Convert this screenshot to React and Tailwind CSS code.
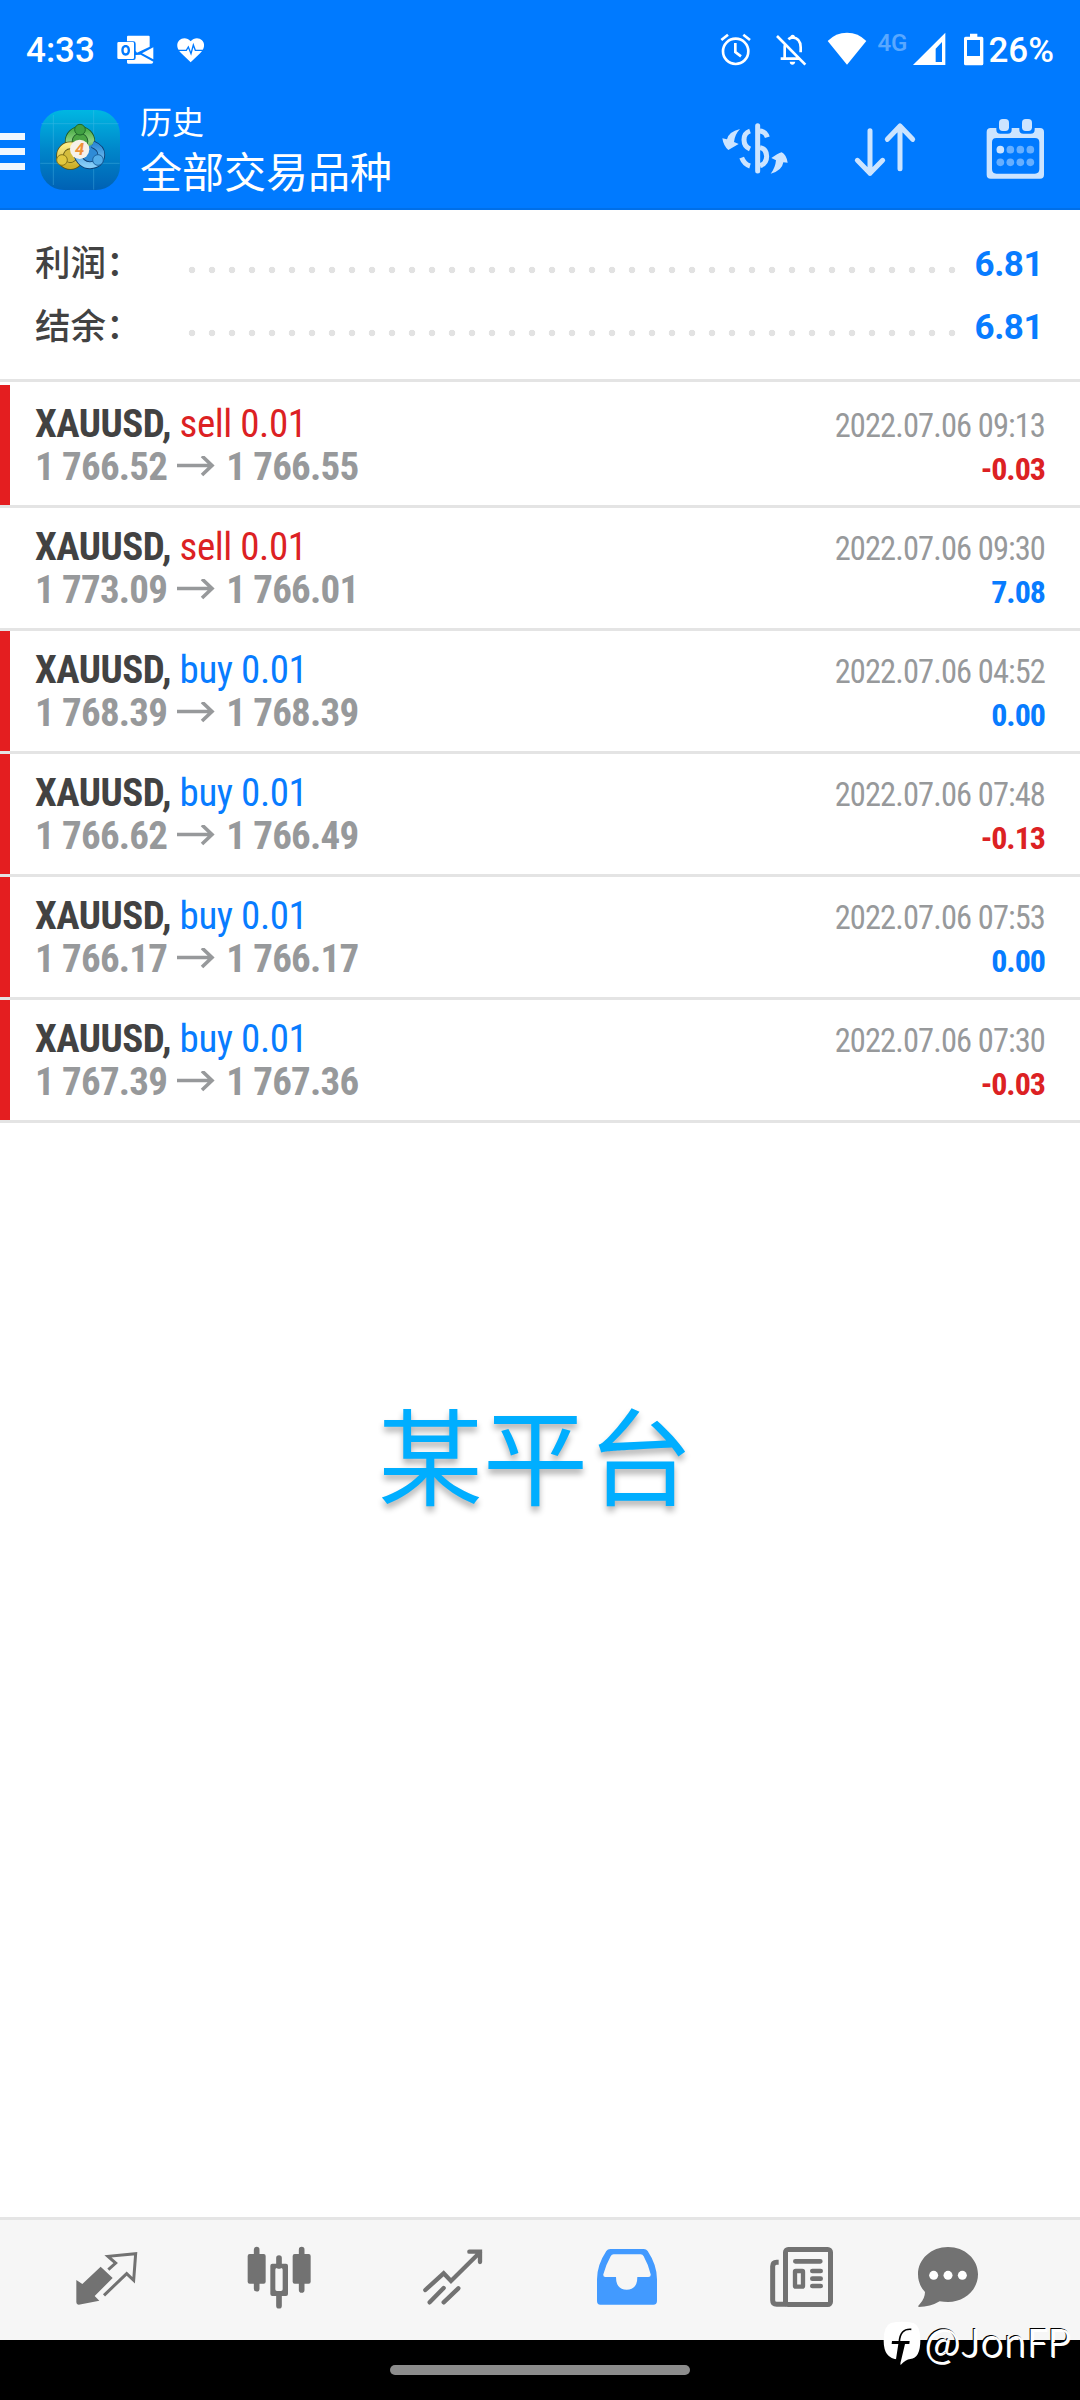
import clsx from 'clsx';

const deals = [
    { side: 'sell', open: '1 766.52', close: '1 766.55', time: '2022.07.06 09:13', profit: '-0.03', marked: true },
    { side: 'sell', open: '1 773.09', close: '1 766.01', time: '2022.07.06 09:30', profit: '7.08', marked: false },
    { side: 'buy', open: '1 768.39', close: '1 768.39', time: '2022.07.06 04:52', profit: '0.00', marked: true },
    { side: 'buy', open: '1 766.62', close: '1 766.49', time: '2022.07.06 07:48', profit: '-0.13', marked: true },
    { side: 'buy', open: '1 766.17', close: '1 766.17', time: '2022.07.06 07:53', profit: '0.00', marked: true },
    { side: 'buy', open: '1 767.39', close: '1 767.36', time: '2022.07.06 07:30', profit: '-0.03', marked: true },
];

const totals = [
    { label: '利润：', value: '6.81' },
    { label: '结余：', value: '6.81' },
];

const StatusBar = () => (
    <div className="flex h-[100px] items-center pl-[26px] pr-[26px] font-['Roboto'] text-[35px] font-medium text-white">
        <span className="pt-[3px]">4:33</span>
        <svg viewBox="345 30 120 120" className="ml-5 size-10" fill="#fff">
            <path d="M381 50q0-3 3-3h62q3 0 3 3v30l-38 18-4-5V71q0-7-7-7h-19z" />
            <path d="M460 82v36l-34-18z" />
            <path d="M381 120h20q6 0 6-7v-8l15-1 38 21q-1 6-6 6h-70q-3 0-3-4z" />
            <path fillRule="evenodd" d="M356 66h42q4 0 4 4v43q0 4-4 4h-42q-4 0-4-4V70q0-4 4-4zm21 9c-9 0-13 7-13 16s4 16 13 16 13-7 13-16-4-16-13-16zm0 7c4 0 6 4 6 9s-2 9-6 9-6-4-6-9 2-9 6-9z" />
        </svg>
        <svg viewBox="513 30 120 120" className="ml-4 size-10">
            <path d="M572 127l-29-28c-14-13-14-30-5-38 9-9 25-8 34 3 9-11 25-12 34-3 9 8 9 25-5 38z" fill="#fff" />
            <path d="M533 91h26l6-10 8 20 7-26 6 16h26" fill="none" stroke="#007aff" strokeWidth="4" />
        </svg>
        <div className="flex-1" />
        <svg viewBox="108 90 120 120" className="size-10" fill="none" stroke="#fff" strokeWidth="8">
            <circle cx="167" cy="154" r="38" />
            <path d="M166 129v27l17 13M124 120l20-16M210 120l-20-16" />
        </svg>
        <svg viewBox="273 90 120 120" className="ml-[15px] size-10" fill="none" stroke="#fff" strokeWidth="8">
            <path d="M291 108l85 86M302 176h56M314 174v-34q0-6 3-10M325 118q7-6 13-6 24 3 24 30v15" />
            <path d="M329 185h17q-2 9-9 9t-8-9zM331 113q0-9 7-9t7 9z" fill="#fff" stroke="none" />
        </svg>
        <svg viewBox="441 90 120 120" className="ml-4 size-10" fill="#fff">
            <path d="M443 123q24-25 58-25t58 25l-58 71z" />
        </svg>
        <span className="ml-2.5 w-8 pb-[15px] text-2xl leading-none opacity-35">4G</span>
        <svg viewBox="687 90 120 120" className="size-10" fill="#fff">
            <path fillRule="evenodd" d="M699 195l97-97v97zm68-49v40h19v-60z" />
        </svg>
        <svg viewBox="840 90 84 120" className="ml-[11px] h-10 w-7" fill="#fff">
            <path fillRule="evenodd" d="M870 101h22v9h13q5 0 5 5v76q0 5-5 5h-48q-5 0-5-5v-76q0-5 5-5h13zm-9 19v48h39v-48z" />
        </svg>
        <span className="pt-[3px]">26%</span>
    </div>
);

const AppLogo = () => (
    <svg viewBox="120 270 240 240" className="size-20 shrink-0">
        <defs>
            <linearGradient id="tile" x1="0" y1="0" x2="0" y2="1">
                <stop offset="0" stopColor="#00b7e2" />
                <stop offset=".5" stopColor="#0086ca" />
                <stop offset="1" stopColor="#0061b4" />
            </linearGradient>
            <linearGradient id="green" x1="0" y1="0" x2="0" y2="1">
                <stop offset="0" stopColor="#4fb04a" />
                <stop offset=".5" stopColor="#8fd283" />
                <stop offset="1" stopColor="#2d8b36" />
            </linearGradient>
            <linearGradient id="yellow" x1="0" y1="0" x2="0" y2="1">
                <stop offset="0" stopColor="#fbec86" />
                <stop offset="1" stopColor="#cdb02a" />
            </linearGradient>
            <linearGradient id="blue" x1="0" y1="0" x2="0" y2="1">
                <stop offset="0" stopColor="#2f8bd6" />
                <stop offset="1" stopColor="#86cdf7" />
            </linearGradient>
        </defs>
        <rect x="120" y="270" width="240" height="240" rx="72" fill="url(#tile)" />
        <path d="M160 285v210M281 271v238M124 311h232M121 430h238" stroke="#5cc3ea" strokeWidth="2" opacity=".5" />
        <circle cx="240" cy="364" r="34" fill="#4aa545" stroke="#1d5a2a" strokeWidth="23" />
        <circle cx="240" cy="364" r="34" fill="none" stroke="url(#green)" strokeWidth="18" />
        <circle cx="211" cy="407" r="31" fill="#d4bc3c" stroke="#5d5312" strokeWidth="23" />
        <circle cx="211" cy="407" r="31" fill="none" stroke="url(#yellow)" strokeWidth="18" />
        <path d="M230 400q12 36 40 36 32-2 34-32 0-20-26-31" fill="#2f8bd6" stroke="#0d3f73" strokeWidth="23" />
        <path d="M230 400q12 36 40 36 32-2 34-32 0-20-26-31" fill="none" stroke="url(#blue)" strokeWidth="18" />
        <circle cx="240" cy="329" r="16" fill="#41a043" stroke="#1d6a2a" strokeWidth="3" />
        <circle cx="186" cy="420" r="16" fill="#e2c83e" stroke="#85751a" strokeWidth="3" />
        <circle cx="294" cy="420" r="16" fill="#55ade8" stroke="#1c63a0" strokeWidth="3" />
        <circle cx="239" cy="388" r="29" fill="#f6f1ea" />
        <text x="239" y="406" textAnchor="middle" className="font-['Roboto'] text-[50px] font-bold italic" fill="#ee9238">4</text>
    </svg>
);

const Toolbar = () => (
    <div className="flex h-[100px] items-center pr-[29px]">
        <div className="flex w-[25px] flex-col gap-2 pt-[3px]">
            <div className="h-[7px] bg-[#f0f7ff]" />
            <div className="h-[7px] bg-[#f0f7ff]" />
            <div className="h-[7px] bg-[#f0f7ff]" />
        </div>
        <div className="ml-[15px]">
            <AppLogo />
        </div>
        <div className="ml-5 flex flex-1 flex-col pb-[6px] font-['Noto_Sans_CJK_SC',sans-serif] text-white">
            <span className="text-[32px] leading-[46px]">历史</span>
            <span className="text-[42px] leading-[54px]">全部交易品种</span>
        </div>
        <div className="flex gap-[58px] text-[#cce4ff]">
            <svg viewBox="117 342 216 216" className="size-[72px]" fill="none" stroke="currentColor">
                <path d="M233 377v136" strokeWidth="15" strokeLinecap="round" />
                <path d="M240 393q16 1 22 19M240 443q20 4 20 26t-20 28M210 393q-18 6-18 26 0 20 18 28M185 473q8 20 25 25" strokeWidth="15" />
                <path d="M180 387q-34 8-39 31l-14-3q4 24 18 35 12-7 31-18l-14-6q2-22 18-39zM272 521q34-8 38-34l13 1q-4-24-18-31-12 4-31 17l14 7q-2 23-16 40z" fill="currentColor" stroke="none" />
            </svg>
            <svg viewBox="507 342 216 216" className="size-[72px]" fill="none" stroke="currentColor" strokeWidth="15" strokeLinecap="round" strokeLinejoin="round">
                <path d="M570 392v128M532 481l38 39 38-39M660 506V378M622 418l38-40 38 40" />
            </svg>
            <svg viewBox="897 342 216 216" className="size-[72px]" fill="currentColor">
                <path fillRule="evenodd" d="M932 384h17v5q0 12 12 12h22q12 0 12-12v-5h23v5q0 12 12 12h22q12 0 12-12v-5h16q12 0 12 12v128q0 12-12 12H932q-12 0-12-12V396q0-12 12-12zm17 30q-13 0-13 13v80q0 14 13 14h116q13 0 13-14v-80q0-13-13-13z" />
                <rect x="957" y="357" width="30" height="36" rx="11" />
                <rect x="1026" y="357" width="30" height="36" rx="11" />
                <circle cx="961" cy="449" r="11.500" />
                <g opacity=".5">
                    <circle cx="991" cy="449" r="11.500" />
                    <circle cx="1021" cy="449" r="11.500" />
                    <circle cx="1051" cy="449" r="11.500" />
                    <circle cx="961" cy="487" r="11.500" />
                    <circle cx="991" cy="487" r="11.500" />
                    <circle cx="1021" cy="487" r="11.500" />
                    <circle cx="1051" cy="487" r="11.500" />
                </g>
            </svg>
        </div>
    </div>
);

const TotalRow = ({ label, value }) => (
    <div className="flex h-[63px] items-center pl-[35px] pr-[37px]">
        <span className="w-[147px] pb-[3px] font-['Noto_Sans_CJK_SC',sans-serif] text-[35.5px] font-medium leading-[60px] text-[#424242]">{label}</span>
        <div className="mt-[14px] h-5 w-[780px] shrink-0 bg-[radial-gradient(circle,#e2e2e2_3px,transparent_3.6px)] bg-[length:20px_20px]" />
        <span className="ml-auto pt-[5px] font-['Roboto'] text-[35px] font-bold tracking-[-0.5px] text-[#087cff]">{value}</span>
    </div>
);

const DealRow = ({ deal }) => (
    <div className="flex h-[123px] border-b-[3px] border-[#e4e4e4]">
        <div className={clsx('w-2.5', deal.marked && 'bg-[#e41e20]')} />
        <div className="flex flex-1 flex-col justify-center pl-[25px] pr-[35px] pt-px font-['Roboto_Condensed'] text-[39px] leading-[43px]">
            <div className="flex h-[43px] items-baseline justify-between">
                <span className="whitespace-pre">
                    <span className="font-bold tracking-[-0.5px] text-[#424242]">XAUUSD, </span>
                    <span className={clsx('tracking-[-0.45px]', deal.side === 'sell' ? 'text-[#dc2123]' : 'text-[#087cff]')}>{deal.side} 0.01</span>
                </span>
                <span className="text-[32.5px] tracking-[-0.9px] text-[#97999b]">{deal.time}</span>
            </div>
            <div className="flex h-[43px] items-baseline justify-between">
                <span className="flex items-center font-bold tracking-[-0.8px] text-[#97999b]">
                    <span>{deal.open}</span>
                    <svg viewBox="0 0 38 22" className="ml-[10px] mr-[11px] h-[22px] w-[38px]" fill="none" stroke="currentColor" strokeWidth="3.600">
                        <path d="M0 9.500h35M25 0l10 9.500-10 9.500" />
                    </svg>
                    <span>{deal.close}</span>
                </span>
                <span className={clsx('text-[32px] font-bold tracking-[-1px]', deal.profit.startsWith('-') ? 'text-[#dc2123]' : 'text-[#087cff]')}>
                    {deal.profit}
                </span>
            </div>
        </div>
    </div>
);

const TabBar = () => (
    <div className="flex h-[123px] items-center border-t-[3px] border-[#e5e5e5] bg-[#f6f6f6] text-[#727272]">
        <svg viewBox="33 42 216 216" className="ml-[71px] size-[72px]" fill="currentColor">
            <path d="M122 110l36 34-54 54 14 14-62 12q-7 0-7-7v-67l18 12z" />
            <path d="M145 119l22-20-23-20 83-8-6 80-21-20-68 65" fill="none" stroke="currentColor" strokeWidth="9" />
        </svg>
        <svg viewBox="549 42 216 216" className="ml-[100px] size-[72px]" fill="currentColor">
            <path d="M590 59v117M725 59v121M657 84v24M657 196v31" stroke="currentColor" strokeWidth="17" strokeLinecap="round" />
            <rect x="563" y="72" width="54" height="89" rx="6" />
            <rect x="698" y="72" width="54" height="89" rx="6" />
            <path fillRule="evenodd" d="M637 101h41q6 0 6 6v85q0 6-6 6h-41q-6 0-6-6v-85q0-6 6-6zm14 13q-5 0-5 5v59q0 5 5 5h12q5 0 5-5v-59q0-5-5-5z" />
        </svg>
        <svg viewBox="1068 42 216 216" className="ml-[101px] size-[72px]" fill="none" stroke="currentColor" strokeWidth="13" strokeLinecap="round">
            <path d="M1096 180l55-50 22 23 87-86M1228 65h32v31M1109 217l42-43M1151 217l44-42" />
            <path d="M1240 60h25v28z" fill="currentColor" stroke="none" />
        </svg>
        <svg viewBox="33 42 216 216" className="ml-[103px] size-[72px]" fill="#429aff">
            <path fillRule="evenodd" d="M91 57h100q8 0 12 6 28 42 28 85v65q0 11-11 11H61q-10 0-10-11v-65q0-43 28-85 4-6 12-6zm10 16q-6 0-9 6-15 27-22 54-1 8 6 8h32q0 38 32 38t32-38h33q8 0 7-8-6-27-21-54-3-6-9-6z" />
        </svg>
        <svg viewBox="558 42 216 216" className="ml-[103px] size-[72px]" fill="none" stroke="currentColor" strokeWidth="15">
            <rect x="616.500" y="58.500" width="135" height="165" rx="8" />
            <path d="M596 97h-6q-12 0-12 12v102q0 12 12 12h28" />
            <path d="M646 94h75M697 123h25M697 146h25M697 168h25" strokeWidth="14" strokeLinecap="round" />
            <rect x="645" y="123" width="24" height="47" rx="2" strokeWidth="13" />
        </svg>
        <svg viewBox="996 42 216 216" className="ml-[74px] size-[72px]" fill="currentColor">
            <path d="M1104 51c50 0 90 36 90 82s-40 83-90 83q-13 0-25-2-28 17-63 17-3-3 3-8 16-18 16-37-21-22-21-53c0-46 40-82 90-82z" />
            <g fill="#fff">
                <circle cx="1061" cy="136" r="13.500" />
                <circle cx="1104" cy="136" r="13.500" />
                <circle cx="1147" cy="136" r="13.500" />
            </g>
        </svg>
    </div>
);

const Watermark = () => (
    <div className="absolute right-[9px] top-[2320px] flex items-start gap-[3px] text-white">
        <svg viewBox="36 30 120 144" className="h-12 w-10">
            <path d="M62 39q34-8 69 0 20 8 20 52 0 54-30 56-14 1-29 18-3-12-8-17-43-2-43-56 0-44 21-53z" fill="#fff" />
            <path d="M124 58q-34-3-36 38" fill="none" stroke="#000" strokeWidth="5" />
            <path d="M66 93h53l-1 9h-13l-10 42-5 20-12-16 7-46H65z" fill="#000" />
        </svg>
        <span className="font-['Noto_Sans_CJK_SC',sans-serif] text-[39px] font-light leading-[40px] [text-shadow:-1px_-1px_0_#000,1px_1px_0_#fff]">@JonFP</span>
    </div>
);

export default function App() {
    return (
        <div className="relative flex h-[2400px] w-[1080px] flex-col overflow-hidden bg-white">
            <header className="h-[210px] border-b-2 border-[#006fe8] bg-[#007aff]">
                <StatusBar />
                <Toolbar />
            </header>
            <section className="h-[172px] border-b-[3px] border-[#e4e4e4] pt-[21px]">
                {totals.map((total) => (
                    <TotalRow key={total.label} {...total} />
                ))}
            </section>
            <main className="flex-1 pt-[3px]">
                {deals.map((deal) => (
                    <DealRow key={deal.time} deal={deal} />
                ))}
                <p className="mt-[248px] pl-[378px] font-['Noto_Sans_CJK_SC',sans-serif] text-[105px] leading-[160px] text-[#00aeff] [text-shadow:0_5px_6px_rgba(0,0,0,0.3)]">
                    某平台
                </p>
            </main>
            <TabBar />
            <div className="flex h-[60px] justify-center bg-black pt-[25px]">
                <div className="h-2.5 w-[300px] rounded-full bg-[#8c8c8c]" />
            </div>
            <Watermark />
        </div>
    );
}
